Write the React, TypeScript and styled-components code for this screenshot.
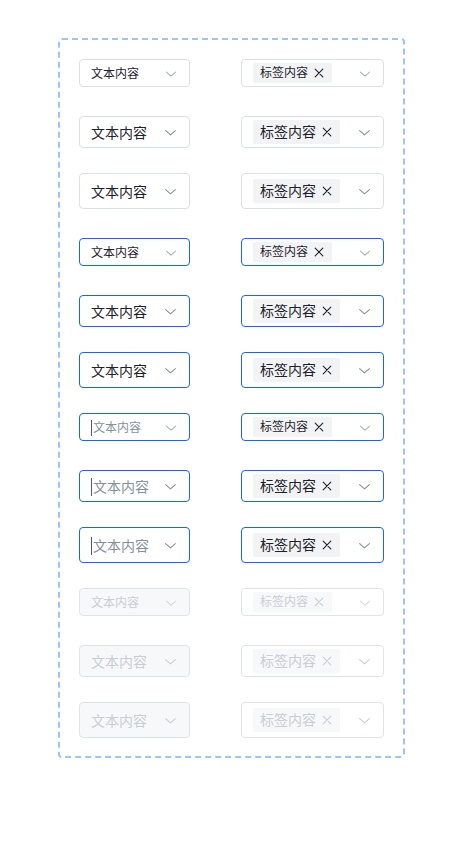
import styled, { createGlobalStyle, css } from 'styled-components';

type Size = 'sm' | 'md' | 'lg';
type State = 'default' | 'focus' | 'typing' | 'disabled';

const rows: { size: Size; state: State; gap: number }[] = [
    { size: 'sm', state: 'default', gap: 0 },
    { size: 'md', state: 'default', gap: 29 },
    { size: 'lg', state: 'default', gap: 25 },
    { size: 'sm', state: 'focus', gap: 29 },
    { size: 'md', state: 'focus', gap: 29 },
    { size: 'lg', state: 'focus', gap: 25 },
    { size: 'sm', state: 'typing', gap: 25 },
    { size: 'md', state: 'typing', gap: 29 },
    { size: 'lg', state: 'typing', gap: 25 },
    { size: 'sm', state: 'disabled', gap: 25 },
    { size: 'md', state: 'disabled', gap: 29 },
    { size: 'lg', state: 'disabled', gap: 25 },
];

const heights = { sm: 28, md: 32, lg: 36 };

function Chevron({ size, disabled }: { size: Size; disabled: boolean }) {
    const w = size === 'sm' ? 12 : 13;
    return (
        <ArrowIcon width={w} height={w} viewBox="0 0 12 12" fill="none" $disabled={disabled}>
            <path d="M1.5 4.2 L6 8.2 L10.5 4.2" stroke="currentColor" strokeWidth="1" strokeLinecap="round" strokeLinejoin="round" />
        </ArrowIcon>
    );
}

function Close({ size }: { size: Size }) {
    const w = size === 'sm' ? 10 : 10;
    return (
        <svg width={w} height={w} viewBox="0 0 10 10" fill="none">
            <path d="M1.2 1.2 L8.8 8.8 M8.8 1.2 L1.2 8.8" stroke="currentColor" strokeWidth="1.1" strokeLinecap="round" />
        </svg>
    );
}

export default function App(): JSX.Element {
    return (
        <>
            <GlobalStyle />
            <Frame>
                {rows.map((r, i) => {
                    const disabled = r.state === 'disabled';
                    return (
                        <Row key={i} $gap={r.gap}>
                            <Select $size={r.size} $state={r.state} $left>
                                {r.state === 'typing' && <Caret $size={r.size} />}
                                <Value $size={r.size} $state={r.state}>
                                    文本内容
                                </Value>
                                <Chevron size={r.size} disabled={disabled} />
                            </Select>
                            <Select $size={r.size} $state={r.state === 'typing' ? 'focus' : r.state}>
                                <Tag $size={r.size} $disabled={disabled}>
                                    标签内容
                                    <Close size={r.size} />
                                </Tag>
                                <Chevron size={r.size} disabled={disabled} />
                            </Select>
                        </Row>
                    );
                })}
            </Frame>
        </>
    );
}

const GlobalStyle = createGlobalStyle`
    body {
        margin: 0;
        background: #ffffff;
        font-family: Inter, "Noto Sans CJK SC", sans-serif;
        color: #1d2129;
    }
`;

const Frame = styled.div`
    box-sizing: border-box;
    width: 347px;
    margin: 38px 0 0 58px;
    padding: 19px 19px 18px;
    border: 2px dashed #9dc3fa;
    border-radius: 4px;
    display: flex;
    flex-direction: column;
`;

const Row = styled.div<{ $gap: number }>`
    display: flex;
    justify-content: space-between;
    align-items: center;
    margin-top: ${(p) => p.$gap}px;
`;

const Select = styled.div<{ $size: Size; $state: State; $left?: boolean }>`
    box-sizing: border-box;
    width: ${(p) => (p.$left ? 111 : 143)}px;
    height: ${(p) => heights[p.$size]}px;
    display: flex;
    align-items: center;
    padding: 1px 12px 0 11px;
    border: 1px solid #dcdfe4;
    border-radius: 4px;
    background: #ffffff;
    ${(p) =>
        (p.$state === 'focus' || p.$state === 'typing') &&
        css`
            border-color: #1664ff;
        `}
    ${(p) =>
        p.$state === 'disabled' &&
        css`
            border-color: #e1e3e8;
            background: ${p.$left ? '#f7f8fa' : '#ffffff'};
        `}
`;

const Value = styled.span<{ $size: Size; $state: State }>`
    font-size: ${(p) => (p.$size === 'sm' ? 12 : 14)}px;
    line-height: 1;
    white-space: nowrap;
    color: ${(p) => (p.$state === 'typing' ? '#86909c' : p.$state === 'disabled' ? '#c9cdd4' : '#1d2129')};
`;

const Caret = styled.span<{ $size: Size }>`
    display: block;
    width: 1px;
    height: ${(p) => (p.$size === 'sm' ? 16 : 18)}px;
    margin-right: 1px;
    background: #4e5969;
`;

const Tag = styled.span<{ $size: Size; $disabled: boolean }>`
    box-sizing: border-box;
    height: ${(p) => (p.$size === 'sm' ? 20 : 24)}px;
    margin-top: -1px;
    display: inline-flex;
    align-items: center;
    gap: 6px;
    padding: 0 8px 0 7px;
    border-radius: 2px;
    font-size: ${(p) => (p.$size === 'sm' ? 12 : 14)}px;
    line-height: 1;
    white-space: nowrap;
    background: ${(p) => (p.$disabled ? '#f7f8fa' : '#f2f3f5')};
    color: ${(p) => (p.$disabled ? '#c9cdd4' : '#1d2129')};
`;

const ArrowIcon = styled.svg<{ $disabled: boolean }>`
    margin-left: auto;
    flex-shrink: 0;
    color: ${(p) => (p.$disabled ? '#c9cdd4' : '#86909c')};
`;
